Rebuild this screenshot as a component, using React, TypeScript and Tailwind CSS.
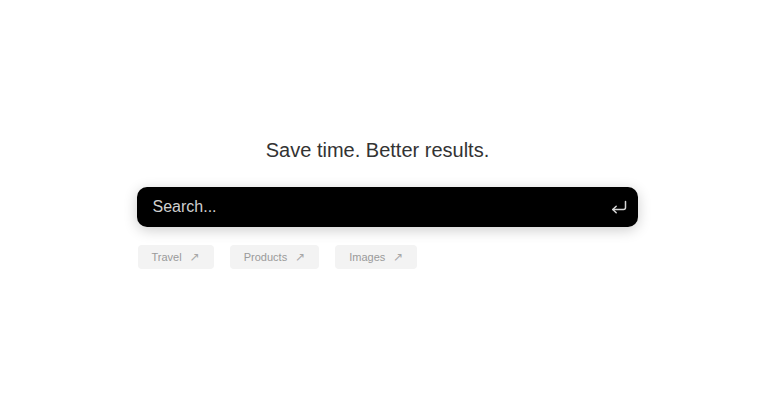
const CHIPS = ["Travel", "Products", "Images"];

function EnterIcon() {
  return (
    <svg width="16" height="14" viewBox="0 0 16 14" fill="none" stroke="#d6d6d6" strokeWidth="1.5" strokeLinecap="round" strokeLinejoin="round">
      <path d="M14.5 1.5v6a2 2 0 0 1-2 2H1.8" />
      <path d="M5.2 6.2 1.8 9.5 5.2 12.8" />
    </svg>
  );
}

export default function App() {
  return (
    <div className="min-h-[415px] w-full bg-white font-['Liberation_Sans',Arial,sans-serif]">
      <div className="mx-auto flex w-[501px] translate-x-[3px] flex-col pt-[136px]">
        <h1 className="pr-[19px] text-center text-[20px] leading-[28px] text-[#333333]">Save time. Better results.</h1>
        <div className="mt-[23px] flex h-[40px] items-center justify-between rounded-[10px] bg-black pl-[16px] pr-[11px] shadow-[0_3px_14px_rgba(0,0,0,0.2)]">
          <span className="text-[16px] text-[#cfcfcf]">Search...</span>
          <EnterIcon />
        </div>
        <div className="mt-[18px] flex gap-[16px] pl-[1px]">
          {CHIPS.map((c) => (
            <button
              key={c}
              type="button"
              className="flex h-[24px] items-center gap-[8px] rounded-[4px] bg-[#f3f3f3] pl-[14px] pr-[14px] text-[11px] text-[#9a9a9a]"
            >
              {c}
              <span className="font-['DejaVu_Sans',sans-serif] text-[12px] text-[#a8a8a8]">↗</span>
            </button>
          ))}
        </div>
      </div>
    </div>
  );
}
